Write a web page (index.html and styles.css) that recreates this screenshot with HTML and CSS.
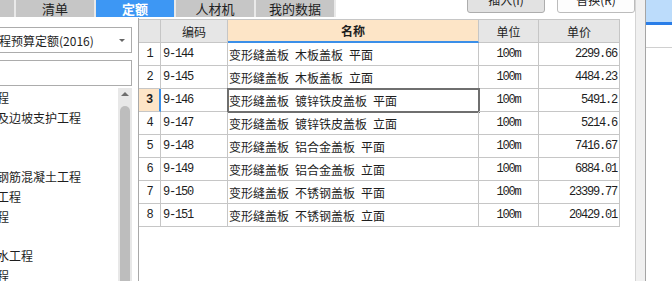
FILE: index.html
```html
<!DOCTYPE html>
<html lang="zh-CN">
<head>
    <meta charset="UTF-8">
    <meta name="viewport" content="width=device-width, initial-scale=1.0">
    <title>定额</title>
    <link rel="stylesheet" href="styles.css">
</head>
<body>

<div class="main">
    <div class="topbar">
        <div class="tabs">
            <div class="tab tab-cut"></div>
            <div class="tab">清单</div>
            <div class="tab active">定额</div>
            <div class="tab">人材机</div>
            <div class="tab">我的数据</div>
        </div>
        <div class="spacer"></div>
        <button type="button" class="btn btn-insert">插入(I)</button>
        <button type="button" class="btn btn-replace">替换(R)</button>
    </div>

    <div class="content">
        <div class="left">
            <div class="select">
                <span class="select-text">北京市建设工程预算定额(2016)</span>
                <span class="caret"></span>
            </div>
            <div class="search"></div>
            <div class="tree-wrap">
                <ul class="tree">
                    <li>土石方工程</li>
                    <li>地基处理及边坡支护工程</li>
                    <li>桩基工程</li>
                    <li>砌筑工程</li>
                    <li>混凝土及钢筋混凝土工程</li>
                    <li>金属结构工程</li>
                    <li>木结构工程</li>
                    <li>门窗工程</li>
                    <li>屋面及防水工程</li>
                    <li>防腐蚀工程</li>
                </ul>
                <div class="scrollbar">
                    <span class="arrow-up"></span>
                    <span class="thumb"></span>
                </div>
            </div>
        </div>

        <div class="grid">
            <div class="row head">
                <div class="cell c-num"></div>
                <div class="cell c-code">编码</div>
                <div class="cell c-name">名称</div>
                <div class="cell c-unit">单位</div>
                <div class="cell c-price">单价</div>
            </div>
            <div class="row">
                <div class="cell c-num mono">1</div>
                <div class="cell c-code mono">9-144</div>
                <div class="cell c-name">变形缝盖板&ensp;木板盖板&ensp;平面</div>
                <div class="cell c-unit mono">100m</div>
                <div class="cell c-price mono">2299.66</div>
            </div>
            <div class="row">
                <div class="cell c-num mono">2</div>
                <div class="cell c-code mono">9-145</div>
                <div class="cell c-name">变形缝盖板&ensp;木板盖板&ensp;立面</div>
                <div class="cell c-unit mono">100m</div>
                <div class="cell c-price mono">4484.23</div>
            </div>
            <div class="row current">
                <div class="cell c-num mono">3</div>
                <div class="cell c-code mono">9-146</div>
                <div class="cell c-name focused">变形缝盖板&ensp;镀锌铁皮盖板&ensp;平面</div>
                <div class="cell c-unit mono">100m</div>
                <div class="cell c-price mono">5491.2</div>
            </div>
            <div class="row">
                <div class="cell c-num mono">4</div>
                <div class="cell c-code mono">9-147</div>
                <div class="cell c-name">变形缝盖板&ensp;镀锌铁皮盖板&ensp;立面</div>
                <div class="cell c-unit mono">100m</div>
                <div class="cell c-price mono">5214.6</div>
            </div>
            <div class="row">
                <div class="cell c-num mono">5</div>
                <div class="cell c-code mono">9-148</div>
                <div class="cell c-name">变形缝盖板&ensp;铝合金盖板&ensp;平面</div>
                <div class="cell c-unit mono">100m</div>
                <div class="cell c-price mono">7416.67</div>
            </div>
            <div class="row">
                <div class="cell c-num mono">6</div>
                <div class="cell c-code mono">9-149</div>
                <div class="cell c-name">变形缝盖板&ensp;铝合金盖板&ensp;立面</div>
                <div class="cell c-unit mono">100m</div>
                <div class="cell c-price mono">6884.01</div>
            </div>
            <div class="row">
                <div class="cell c-num mono">7</div>
                <div class="cell c-code mono">9-150</div>
                <div class="cell c-name">变形缝盖板&ensp;不锈钢盖板&ensp;平面</div>
                <div class="cell c-unit mono">100m</div>
                <div class="cell c-price mono">23399.77</div>
            </div>
            <div class="row">
                <div class="cell c-num mono">8</div>
                <div class="cell c-code mono">9-151</div>
                <div class="cell c-name">变形缝盖板&ensp;不锈钢盖板&ensp;立面</div>
                <div class="cell c-unit mono">100m</div>
                <div class="cell c-price mono">20429.01</div>
            </div>
        </div>
    </div>
</div>

<div class="side">
    <div class="gutter"></div>
    <div class="pane">
        <div class="pane-tab"></div>
        <div class="pane-row"></div>
    </div>
</div>

</body>
</html>
```

FILE: styles.css
```css
* {
    box-sizing: border-box;
}
body {
    margin: 0;
    width: 672px;
    height: 281px;
    overflow: hidden;
    display: flex;
    font-family: "Noto Sans CJK SC", sans-serif;
    font-size: 12px;
    color: #1e1e1e;
    background: #fff;
}
.main {
    width: 635px;
    display: flex;
    flex-direction: column;
}

/* top bar: tabs + buttons */
.topbar {
    height: 18px;
    display: flex;
    align-items: flex-start;
}
.tabs {
    display: flex;
    gap: 2px;
    width: 336px;
    height: 17px;
    background: #e9e9e9;
}
.tab {
    width: 78px;
    height: 17px;
    background: #c6c6c6;
    text-align: center;
    font-size: 13px;
    line-height: 17px;
    color: #222;
}
.tab-cut {
    width: 14px;
}
.tab.active {
    background: #3d97f4;
    color: #fff;
    font-weight: bold;
}
.spacer {
    flex: 1;
}
.btn {
    width: 78px;
    height: 26px;
    margin-top: -13px;
    padding: 0;
    border: 1px solid #adadad;
    border-radius: 3px;
    font-family: inherit;
    font-size: 12px;
    line-height: 24px;
    color: #222;
}
.btn-insert {
    background: #e2e2e2;
    margin-right: 12px;
}
.btn-replace {
    background: #fdfdfd;
    border-color: #bcbcbc;
}

/* left panel */
.content {
    flex: 1;
    display: flex;
    min-height: 0;
}
.left {
    width: 138px;
    display: flex;
    flex-direction: column;
}
.select, .search {
    width: 133px;
    height: 26px;
    margin-left: -1px;
    border: 1px solid #acacac;
    background: #fff;
}
.select {
    margin-top: 9px;
    display: flex;
    align-items: center;
    overflow: hidden;
    position: relative;
}
.select-text {
    margin-left: -73px;
    white-space: nowrap;
}
.caret {
    position: absolute;
    right: 6px;
    top: 11px;
    border-left: 3px solid transparent;
    border-right: 3px solid transparent;
    border-top: 3px solid #666;
}
.search {
    margin-top: 7px;
}
.tree-wrap {
    flex: 1;
    margin-top: 2px;
    display: flex;
    min-height: 0;
}
.tree {
    list-style: none;
    margin: 0;
    padding: 0;
    width: 118px;
    overflow: hidden;
}
.tree li {
    line-height: 19.8px;
    white-space: nowrap;
    margin-left: -51px;
    color: #1e1e1e;
}
.scrollbar {
    width: 14px;
    background: #e8e8e8;
    display: flex;
    flex-direction: column;
    align-items: center;
}
.arrow-up {
    margin-top: 4px;
    border-left: 4px solid transparent;
    border-right: 4px solid transparent;
    border-bottom: 4px solid #6e6e6e;
}
.thumb {
    flex: 1;
    width: 10px;
    margin-top: 10px;
    background: #bdbdbd;
    border-radius: 5px 5px 0 0;
}

/* grid */
.grid {
    flex: 1;
    border-left: 1px solid #a9a9a9;
    padding-top: 1px;
    background: #fff;
}
.row {
    display: flex;
    height: 23px;
}
.cell {
    display: flex;
    align-items: center;
    padding: 0 2px;
    border-right: 1px solid #c6c6c6;
    border-bottom: 1px solid #c6c6c6;
    white-space: nowrap;
    overflow: hidden;
}
.c-num {
    width: 22px;
    justify-content: center;
}
.c-code {
    width: 67px;
}
.c-name {
    width: 251px;
    padding-left: 1px;
}
.c-unit {
    width: 60px;
    justify-content: center;
}
.c-price {
    width: 81px;
    justify-content: flex-end;
    padding-right: 2px;
}
.mono {
    font-family: "Liberation Mono", monospace;
    font-size: 12px;
    letter-spacing: -1.2px;
}
.head {
    height: 24px;
}
.head .cell {
    border-top: 1px solid #c6c6c6;
    background: #e6e6e6;
    justify-content: center;
    padding: 0;
}
.head .c-name {
    background: #fde5c7;
    border-bottom: 2px solid #3b8fe8;
    font-weight: bold;
}
.current .c-num {
    background: #fde5c7;
    border-right: 2px solid #3b8fe8;
    font-weight: bold;
}
.focused {
    outline: 2px solid #6f6f6f;
    outline-offset: -1px;
}

/* right side */
.side {
    width: 37px;
    display: flex;
}
.gutter {
    width: 11px;
    background: #f0f0f0;
    border-left: 1px solid #d4d4d4;
    border-right: 1px solid #a5a5a5;
}
.pane {
    flex: 1;
}
.pane-tab {
    height: 25px;
    background: #bcdcfb;
    border-bottom: 3px solid #2a7ee8;
}
.pane-row {
    height: 23px;
    border-bottom: 1px solid #d0d0d0;
}
```
